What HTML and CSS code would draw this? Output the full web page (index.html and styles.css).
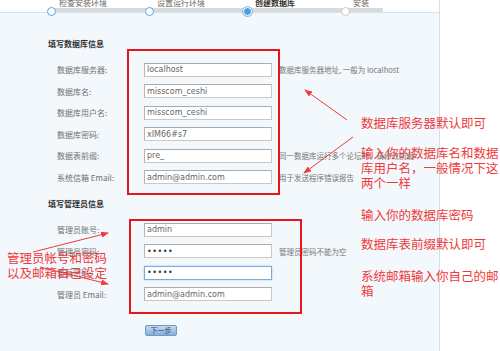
FILE: index.html
```html
<!DOCTYPE html>
<html lang="zh-CN">
<head>
    <meta charset="UTF-8">
    <title>安装 - 创建数据库</title>
    <link rel="stylesheet" href="styles.css">
</head>
<body>
    <div class="panel">
        <!-- Step bar -->
        <div class="header">
            <div class="steps">
                <div class="step"><span class="dot"></span><span class="step-label">检查安装环境</span></div>
                <div class="step"><span class="dot"></span><span class="step-label">设置运行环境</span></div>
                <div class="step active"><span class="dot"></span><span class="step-label">创建数据库</span></div>
                <div class="step todo"><span class="dot"></span><span class="step-label">安装</span></div>
            </div>
        </div>

        <form class="install-form">
            <h3 class="section-title">填写数据库信息</h3>
            <div class="form-row">
                <label>数据库服务器:</label>
                <input type="text" value="localhost" readonly>
                <span class="hint">数据库服务器地址, 一般为 localhost</span>
            </div>
            <div class="form-row">
                <label>数据库名:</label>
                <input type="text" value="misscom_ceshi" readonly>
            </div>
            <div class="form-row">
                <label>数据库用户名:</label>
                <input type="text" value="misscom_ceshi" readonly>
            </div>
            <div class="form-row">
                <label>数据库密码:</label>
                <input type="text" value="xIM66#s7" readonly>
            </div>
            <div class="form-row">
                <label>数据表前缀:</label>
                <input type="text" value="pre_" readonly>
                <span class="hint">同一数据库运行多个论坛时，请修改前缀</span>
            </div>
            <div class="form-row">
                <label>系统信箱 Email:</label>
                <input type="text" value="admin@admin.com" readonly>
                <span class="hint">用于发送程序错误报告</span>
            </div>

            <h3 class="section-title admin">填写管理员信息</h3>
            <div class="form-row">
                <label>管理员账号:</label>
                <input type="text" value="admin" readonly>
            </div>
            <div class="form-row">
                <label>管理员密码:</label>
                <input type="password" value="admin" readonly>
                <span class="hint">管理员密码不能为空</span>
            </div>
            <div class="form-row">
                <label>重复密码:</label>
                <input type="password" class="focused" value="admin" readonly>
            </div>
            <div class="form-row">
                <label>管理员 Email:</label>
                <input type="text" value="admin@admin.com" readonly>
            </div>

            <button class="next-btn" type="button">下一步</button>
        </form>
    </div>

    <!-- Annotation layer: boxes and arrows drawn over the form -->
    <svg class="marks" width="500" height="351" viewBox="0 0 500 351">
        <defs>
            <marker id="head" markerWidth="8" markerHeight="6" refX="7" refY="3" orient="auto" markerUnits="userSpaceOnUse">
                <path d="M0,0 L8,3 L0,6 Z" fill="#ef3b3b"/>
            </marker>
        </defs>
        <rect x="128" y="50" width="151" height="144" fill="none" stroke="#e8161c" stroke-width="2"/>
        <rect x="130" y="220" width="171" height="93" fill="none" stroke="#e8161c" stroke-width="2"/>
        <line x1="347" y1="120" x2="305" y2="90" stroke="#ef3b3b" stroke-width="1" marker-end="url(#head)"/>
        <line x1="353" y1="137" x2="304" y2="173" stroke="#ef3b3b" stroke-width="1" marker-end="url(#head)"/>
        <line x1="33" y1="252" x2="108" y2="233" stroke="#ef3b3b" stroke-width="1" marker-end="url(#head)"/>
        <line x1="40" y1="267" x2="108" y2="284" stroke="#ef3b3b" stroke-width="1" marker-end="url(#head)"/>
    </svg>

    <div class="notes">
        <p class="note">数据库服务器默认即可</p>
        <p class="note gap-1">输入你的数据库名和数据库用户名，一般情况下这两个一样</p>
        <p class="note gap-2">输入你的数据库密码</p>
        <p class="note gap-3">数据库表前缀默认即可</p>
        <p class="note gap-4">系统邮箱输入你自己的邮箱</p>
    </div>

    <p class="note note-left">管理员帐号和密码<br>以及邮箱自己设定</p>
</body>
</html>
```

FILE: styles.css
```css
* {
    margin: 0;
    padding: 0;
    box-sizing: border-box;
}

body {
    width: 500px;
    height: 351px;
    overflow: hidden;
    position: relative;
    background-color: #ffffff;
    color: #666666;
    font-family: "DejaVu Sans", "Noto Sans CJK SC", sans-serif;
}

.panel {
    width: 440px;
    height: 351px;
    background-color: #f3f8fc;
    border-right: 1px solid #d3e1ec;
}

/* Step bar */
.header {
    height: 13px;
    background-color: #ffffff;
    border-bottom: 1px solid #d3e3ee;
}

.steps {
    display: flex;
    position: relative;
    height: 12px;
    padding-left: 47px;
}

.steps::before {
    content: '';
    position: absolute;
    left: 51px;
    top: 8px;
    width: 332px;
    height: 4px;
    background-color: #dadada;
}

.step {
    width: 111px;
    display: flex;
    position: relative;
}

.dot {
    width: 9px;
    height: 9px;
    margin-top: 6.5px;
    flex-shrink: 0;
    border-radius: 50%;
    border: 1.5px solid #5aa7e2;
    background-color: #ffffff;
    position: relative;
    z-index: 1;
}

.step.active .dot {
    background-color: #4a9fe3;
    border-color: #ffffff;
    box-shadow: 0 0 0 1px #8fc1ec;
}

.step.todo .dot {
    border-color: #c9c9c9;
}

.step-label {
    font-family: "Noto Sans CJK SC", sans-serif;
    font-size: 8px;
    line-height: 9px;
    margin-top: -2px;
    margin-left: 3px;
    color: #666666;
    white-space: nowrap;
}

.step.active .step-label {
    font-weight: bold;
    color: #333333;
}

/* Form */
.install-form {
    padding-top: 25px;
}

.section-title {
    font-family: "Noto Sans CJK SC", sans-serif;
    font-size: 8px;
    line-height: 12px;
    font-weight: bold;
    color: #333333;
    margin-left: 48px;
    margin-bottom: 9px;
}

.section-title.admin {
    margin-top: 10px;
}

.form-row {
    display: flex;
    align-items: center;
    height: 21.5px;
}

.form-row label {
    width: 87px;
    margin-left: 57px;
    font-family: "Noto Sans CJK SC", sans-serif;
    font-size: 8px;
    color: #707070;
    white-space: nowrap;
}

.form-row input {
    width: 128px;
    height: 14px;
    padding: 0 2px;
    border: 1px solid #c8c8c8;
    border-top-color: #ababab;
    border-left-color: #b5b5b5;
    background-color: #ffffff;
    font-family: "DejaVu Sans", sans-serif;
    font-size: 8px;
    color: #666666;
    outline: none;
}

.form-row input[type="password"] {
    color: #333333;
    letter-spacing: 0.5px;
}

.form-row input.focused {
    border-color: #74ade0;
    box-shadow: 0 0 2px #a6cdf0;
}

.hint {
    margin-left: 7px;
    font-family: "Noto Sans CJK SC", sans-serif;
    font-size: 7.5px;
    color: #777777;
    white-space: nowrap;
}

.next-btn {
    display: block;
    margin: 20px 0 0 145px;
    width: 32px;
    height: 11px;
    border: 1px solid #6f98c4;
    border-radius: 2px;
    background: linear-gradient(#c3daf0, #85afdb);
    font-family: "Noto Sans CJK SC", sans-serif;
    font-size: 7px;
    line-height: 9px;
    color: #2d4660;
}

/* Annotations */
.marks {
    position: absolute;
    top: 0;
    left: 0;
    pointer-events: none;
}

.notes {
    position: absolute;
    left: 361px;
    top: 114.5px;
    width: 139px;
}

.note {
    font-family: "Noto Sans CJK SC", sans-serif;
    font-size: 12.5px;
    line-height: 15px;
    color: #f0393a;
}

.note.gap-1 {
    margin-top: 15.5px;
}

.note.gap-2 {
    margin-top: 16.5px;
}

.note.gap-3 {
    margin-top: 14px;
}

.note.gap-4 {
    margin-top: 17px;
}

.note-left {
    position: absolute;
    left: 7px;
    top: 249.5px;
    width: 110px;
}
```
